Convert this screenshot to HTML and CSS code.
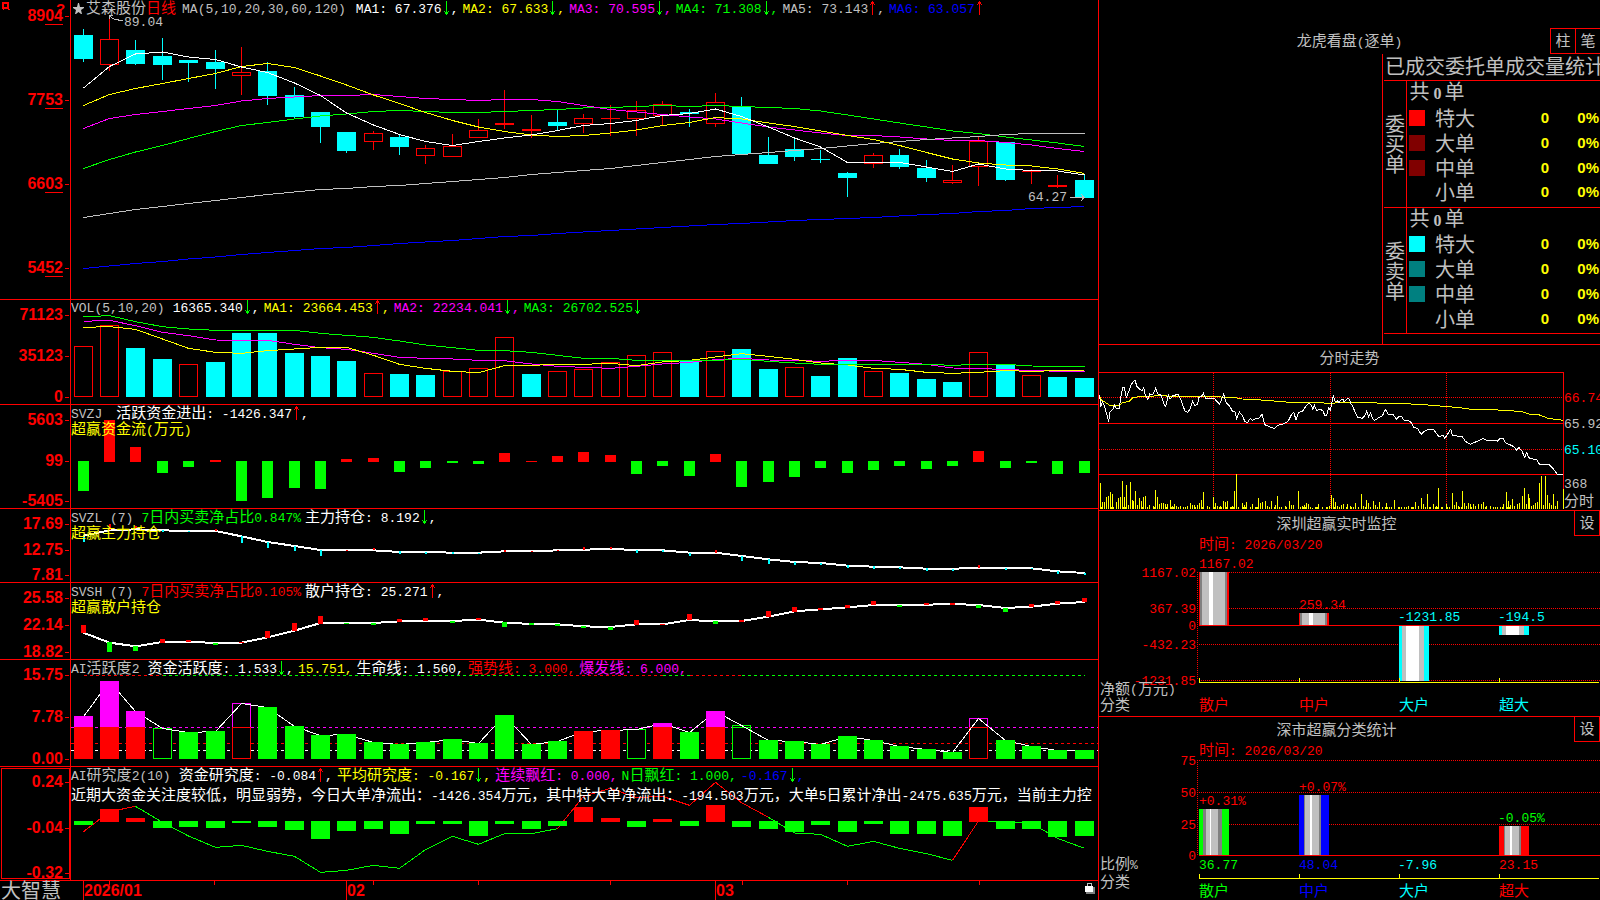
FILE: index.html
```html
<!DOCTYPE html>
<html lang="zh-CN">
<head>
<meta charset="utf-8">
<title>艾森股份 日线</title>
<link rel="stylesheet" href="styles.css">
</head>
<body>
<svg class="defs" aria-hidden="true">
  <symbol id="down" viewBox="0 0 5 14"><path d="M2 0h1v14h-1zM0 10h1v1h3v-1h1v1h-1v2h-3v-2h-1z"/></symbol>
  <symbol id="up" viewBox="0 0 5 14"><path d="M2 0h1v14h-1zM1 1h3v2h1v1h-1v-1h-3v1h-1v-1h1z"/></symbol>
</svg>
<main class="screen">
  <section class="charts">
    <article class="panel">
      <div class="axis axis-price"><span>89<u>04</u></span><span>77<u>53</u></span><span>66<u>03</u></span><span>54<u>52</u></span></div>
      <svg class="plot" id="price" viewBox="71 0 1027 299" preserveAspectRatio="none"></svg>
      <div class="legend">
        <p class="row gray"><svg class="star" viewBox="0 0 11 11"><path d="M5 0h1l1 4h4v1l-3 2 1 4h-1l-2.500-2-2.500 2h-1l1-4-3-2v-1h4z"/></svg><b class="stock">艾森股份<i class="red">日线</i></b><b class="m formula">MA(5,10,20,30,60,120)</b>
          <b class="m white">MA1: 67.376<svg class="arr green"><use href="#down"/></svg>,</b>
          <b class="m yellow">MA2: 67.633<svg class="arr green"><use href="#down"/></svg>,</b>
          <b class="m magenta">MA3: 70.595<svg class="arr green"><use href="#down"/></svg>,</b>
          <b class="m green">MA4: 71.308<svg class="arr green"><use href="#down"/></svg>,</b>
          <b class="m gray">MA5: 73.143<svg class="arr red"><use href="#up"/></svg>,</b>
          <b class="m blue">MA6: 63.057<svg class="arr red"><use href="#up"/></svg></b></p>
      </div>
      <span class="callout high m">89.04</span>
      <span class="callout low m">64.27</span>
    </article>
    <article class="panel">
      <div class="axis"><span>71123</span><span>35123</span><span>0</span></div>
      <svg class="plot" id="volume" viewBox="71 300 1027 104" preserveAspectRatio="none"></svg>
      <div class="legend"><p class="row gray"><b class="m">VOL(5,10,20)</b>
        <b class="m white after-title">16365.340<svg class="arr green"><use href="#down"/></svg>,</b>
        <b class="m yellow">MA1: 23664.453<svg class="arr red"><use href="#up"/></svg>,</b>
        <b class="m magenta">MA2: 22234.041<svg class="arr green"><use href="#down"/></svg>,</b>
        <b class="m green">MA3: 26702.525<svg class="arr green"><use href="#down"/></svg></b></p></div>
    </article>
    <article class="panel">
      <div class="axis"><span>5603</span><span>99</span><span>-5405</span></div>
      <svg class="plot" id="flow" viewBox="71 405 1027 103" preserveAspectRatio="none"></svg>
      <div class="legend"><p class="row gray"><b class="m">SVZJ</b>
        <b class="white wide-gap">活跃资金进出<i class="m">: -1426.347</i><svg class="arr red"><use href="#up"/></svg><i class="m">,</i></b></p>
        <p class="row yellow"><b>超赢资金流<i class="m">(</i>万元<i class="m">)</i></b></p></div>
    </article>
    <article class="panel">
      <div class="axis"><span>17.69</span><span>12.75</span><span>7.81</span></div>
      <svg class="plot" id="mainforce" viewBox="71 509 1027 73" preserveAspectRatio="none"></svg>
      <div class="legend"><p class="row gray"><b class="m">SVZL (7)</b>
        <b class="green after-title"><i class="m">7</i>日内买卖净占比<i class="m">0.847%</i></b>
        <b class="white">主力持仓<i class="m">: 8.192</i><svg class="arr green"><use href="#down"/></svg><i class="m">,</i></b></p>
        <p class="row yellow"><b>超赢主力持仓</b></p></div>
    </article>
    <article class="panel">
      <div class="axis"><span>25.58</span><span>22.14</span><span>18.82</span></div>
      <svg class="plot" id="retail" viewBox="71 583 1027 76" preserveAspectRatio="none"></svg>
      <div class="legend"><p class="row gray"><b class="m">SVSH (7)</b>
        <b class="red after-title"><i class="m">7</i>日内买卖净占比<i class="m">0.105%</i></b>
        <b class="white">散户持仓<i class="m">: 25.271</i><svg class="arr red"><use href="#up"/></svg><i class="m">,</i></b></p>
        <p class="row yellow"><b>超赢散户持仓</b></p></div>
    </article>
    <article class="panel">
      <div class="axis"><span>15.75</span><span>7.78</span><span>0.00</span></div>
      <svg class="plot" id="active" viewBox="71 660 1027 106" preserveAspectRatio="none"></svg>
      <div class="legend"><p class="row gray"><b><i class="m">AI</i>活跃度<i class="m">2</i></b>
        <b class="white after-title">资金活跃度<i class="m">: 1.533</i><svg class="arr green"><use href="#down"/></svg><i class="m">,</i></b>
        <b class="m yellow">15.751,</b>
        <b class="white">生命线<i class="m">: 1.560,</i></b>
        <b class="red">强势线<i class="m">: 3.000,</i></b>
        <b class="magenta">爆发线<i class="m">: 6.000,</i></b></p></div>
    </article>
    <article class="panel">
      <div class="axis selected"><span>0.24</span><span>-0.04</span><span>-0.32</span></div>
      <svg class="plot" id="research" viewBox="71 767 1027 113" preserveAspectRatio="none"></svg>
      <div class="legend spaced"><p class="row gray"><b><i class="m">AI</i>研究度<i class="m">2(10)</i></b>
        <b class="white after-title">资金研究度<i class="m">: -0.084</i><svg class="arr red"><use href="#up"/></svg><i class="m">,</i></b>
        <b class="yellow">平均研究度<i class="m">: -0.167</i><svg class="arr green"><use href="#down"/></svg><i class="m">,</i></b>
        <b class="magenta">连续飘红<i class="m">: 0.000,</i></b>
        <b class="green"><i class="m">N</i>日飘红<i class="m">: 1.000,</i></b>
        <b class="m blue">-0.167<svg class="arr green"><use href="#down"/></svg>,</b></p>
        <p class="row white"><b>近期大资金关注度较低，明显弱势，今日大单净流出：<i class="m">-1426.354</i>万元，其中特大单净流出：<i class="m">-194.503</i>万元，大单<i class="m">5</i>日累计净出<i class="m">-2475.635</i>万元，当前主力控</b></p></div>
    </article>
    <footer class="timeline">
      <span class="brand">大智慧</span>
      <div class="months"><svg class="ticks" id="ticks" viewBox="71 880 1027 20" preserveAspectRatio="none"></svg>
        <span>2026/01</span><span>02</span><span>03</span></div>
      <svg class="lock" viewBox="0 0 10 12"><path fill="#c0c0c0" d="M2 1h5v3h-1v-2h-3v2h-1z"/><path fill="#808080" d="M1 5h9v7h-9z"/><path fill="#fff" d="M0 4h8v6h-8z"/></svg>
    </footer>
    <svg class="corner" viewBox="0 0 70 20"><path d="M2 2h7v7h-7zM4 4v3h3v-3zM3 9h1v1h-1zM8 9h2v1h-2z" fill-rule="evenodd"/></svg>
    <span class="help">?</span>
  </section>

  <aside class="side">
    <section class="box orders">
      <header class="bar"><h2>龙虎看盘<i class="m">(</i>逐单<i class="m">)</i></h2><div class="tools"><button type="button">柱</button><button type="button">笔</button></div></header>
      <div class="stats">
        <table>
          <caption><span>已成交委托单成交量统计</span></caption>
          <tbody>
            <tr><th class="group" rowspan="5" scope="rowgroup">委<br>买<br>单</th><th class="total" colspan="4">共<em>0</em>单</th></tr>
            <tr><td class="sw"><span class="s1"></span></td><th>特大</th><td>0</td><td>0%</td></tr>
            <tr><td class="sw"><span class="s2"></span></td><th>大单</th><td>0</td><td>0%</td></tr>
            <tr><td class="sw"><span class="s2"></span></td><th>中单</th><td>0</td><td>0%</td></tr>
            <tr><td class="sw"></td><th>小单</th><td>0</td><td>0%</td></tr>
          </tbody>
          <tbody>
            <tr><th class="group" rowspan="5" scope="rowgroup">委<br>卖<br>单</th><th class="total" colspan="4">共<em>0</em>单</th></tr>
            <tr><td class="sw"><span class="s3"></span></td><th>特大</th><td>0</td><td>0%</td></tr>
            <tr><td class="sw"><span class="s4"></span></td><th>大单</th><td>0</td><td>0%</td></tr>
            <tr><td class="sw"><span class="s4"></span></td><th>中单</th><td>0</td><td>0%</td></tr>
            <tr><td class="sw"></td><th>小单</th><td>0</td><td>0%</td></tr>
          </tbody>
        </table>
      </div>
    </section>
    <section class="box"><header class="bar plain"><h2>分时走势</h2></header><svg class="view" id="intraday" viewBox="1099 372 501 137" preserveAspectRatio="xMinYMin meet"></svg></section>
    <section class="box"><header class="bar one"><h2>深圳超赢实时监控</h2><button type="button">设</button></header><svg class="view" id="monitor" viewBox="1099 536 501 180" preserveAspectRatio="xMinYMin meet"></svg></section>
    <section class="box"><header class="bar one"><h2>深市超赢分类统计</h2><button type="button">设</button></header><svg class="view" id="classes" viewBox="1099 742 501 158" preserveAspectRatio="xMinYMin meet"></svg></section>
  </aside>
</main>
<script src="charts.js"></script>
</body>
</html>
```
FILE: styles.css
```css
* { box-sizing: border-box; }
html, body { margin: 0; height: 100%; }
body {
  background: #000;
  color: #c0c0c0;
  font: 15px/16px "Noto Sans CJK SC", sans-serif;
  overflow: hidden;
}
p, h2 { margin: 0; font: inherit; }
b, i, em, th { font-style: normal; font-weight: inherit; }
.defs { position: absolute; width: 0; height: 0; }
.m { font-family: "Liberation Mono", "Noto Sans CJK SC", monospace; font-size: 13px; }
.red { color: #f00; } .green { color: #0f0; } .yellow { color: #ff0; }
.magenta { color: #f0f; } .blue { color: #00f; } .white { color: #fff; } .gray { color: #c0c0c0; }

.screen { display: grid; grid-template-columns: minmax(0, 1098fr) minmax(0, 502fr); grid-template-rows: minmax(0, 1fr); height: 100vh; }
.charts {
  position: relative; display: grid; min-width: 0;
  grid-template-rows: minmax(0, 299fr) minmax(0, 105fr) minmax(0, 104fr) minmax(0, 74fr) minmax(0, 77fr) minmax(0, 107fr) minmax(0, 114fr) minmax(0, 20fr);
}
.panel { position: relative; display: grid; grid-template: minmax(0, 1fr) / 71px minmax(0, 1fr); min-height: 0; border-top: 1px solid #f00; }
.panel:first-child { border-top: 0; }
.axis {
  display: flex; flex-direction: column; justify-content: space-between; align-items: flex-end;
  padding: 8px 7px 0 0; border-right: 1px solid #f00;
  color: #f00; font: bold 16px/14px "Liberation Sans", sans-serif;
}
.axis span { position: relative; }
.axis span::after { content: ""; position: absolute; right: -6px; top: 7px; width: 4px; height: 1px; background: #f00; }
.axis u { display: inline-block; text-decoration: none; padding-bottom: 1px; border-bottom: 1px solid #f00; margin-bottom: -2px; }
.axis-price { padding: 9px 7px 24px 0; }
.axis.selected { outline: 1px solid #f00; outline-offset: -2px; }
.plot { grid-area: 1 / 2; width: 100%; height: 100%; display: block; min-height: 0; }
svg { shape-rendering: crispEdges; }
.legend { grid-area: 1 / 2; position: relative; overflow: hidden; white-space: nowrap; }
.row { display: flex; gap: 4px; height: 16px; align-items: baseline; line-height: 13px; }
.legend.spaced .row { margin-bottom: 4px; }
.row b { flex: none; }
.after-title { margin-left: 4px; }
.wide-gap { margin-left: 10px; }
.arr { width: 5px; height: 14px; margin: 0 2px; vertical-align: -2px; fill: currentColor; }
.star { width: 11px; height: 11px; margin: 0 -2px 0 2px; align-self: center; flex: none; fill: #c0c0c0; shape-rendering: auto; }
.formula { margin: 0 6px 0 2px; }
.callout { position: absolute; line-height: 14px; }
.callout.high { left: 124px; top: 16px; }
.callout.low { right: 31px; bottom: 94px; }
.timeline { display: grid; grid-template: minmax(0, 1fr) / 71px minmax(0, 1fr); position: relative; line-height: 20px; border-top: 1px solid #f00; }
.brand { font-size: 20px; padding-left: 1px; line-height: 18px; }
.months { position: relative; display: grid; grid-template-columns: 263fr 369fr 382fr; padding-left: 13px; color: #f00; font: bold 16px/20px "Liberation Sans", sans-serif; }
.ticks { position: absolute; left: 0; top: -1px; width: 100%; height: 20px; }
.lock { position: absolute; right: 3px; top: 1px; width: 10px; height: 12px; }
.corner { position: absolute; left: 0; top: 0; width: 70px; height: 20px; fill: #f00; }
.help { position: absolute; left: 56px; top: 0; color: #f00; font: bold 15px/18px "Liberation Sans", sans-serif; }

.side {
  display: grid; min-width: 0; border-left: 1px solid #f00;
  grid-template-rows: minmax(0, 344fr) minmax(0, 166fr) minmax(0, 206fr) minmax(0, 184fr);
}
.box { display: flex; flex-direction: column; min-height: 0; min-width: 0; border-top: 1px solid #f00; overflow: hidden; }
.box:first-child { border-top: 0; }
.bar { display: grid; grid-template-columns: 1fr auto 1fr; flex: none; height: 26px; }
.bar h2 { line-height: 24px; text-align: center; }
.bar.plain { height: 27px; }
.bar.plain h2, .orders h2 { grid-column: 2; }
.bar.one { grid-template-columns: 1fr 26px; height: 25px; }
.bar.one button { margin-top: -1px; }
button { background: #000; border: 1px solid #f00; color: inherit; font: inherit; width: 26px; height: 26px; padding: 0 0 2px; }
.orders .bar { padding-top: 28px; height: 54px; }
.tools { display: flex; justify-content: flex-end; }
.tools button { width: 25px; border-right: 0; }
.view { flex: 1; width: 100%; min-height: 0; display: block; }
.view text { font-family: "Liberation Mono", "Noto Sans CJK SC", monospace; font-size: 13px; }
.view .cjk { font-family: "Noto Sans CJK SC", sans-serif; font-size: 15px; }

.stats { flex: 1; margin-left: 283px; border-left: 1px solid #f00; padding-left: 1px; overflow: hidden; }
table { width: 100%; border-collapse: collapse; font-size: 20px; line-height: 20px; }
caption { text-align: left; white-space: nowrap; height: 27px; padding-left: 1px; line-height: 24px; border-bottom: 1px solid #f00; }
caption span { display: block; width: 0; }
tbody { border-bottom: 1px solid #f00; }
tr { height: 25px; }
tr:first-child { height: 24px; }
th, td { padding: 0 0 4px; text-align: left; white-space: nowrap; }
td { color: #ff0; text-align: right; font: bold 15px/20px "Liberation Sans", sans-serif; }
th.group { width: 22px; border-right: 1px solid #f00; padding: 1px 0 0 1px; }
th.total { padding-left: 3px; }
em { display: inline-block; width: 12px; text-align: right; margin-right: 3px; font: bold 16px/18px "Liberation Serif", serif; }
td.sw { width: 29px; padding-left: 2px; text-align: left; }
td.sw span { display: block; width: 16px; height: 16px; }
.s1 { background: #f00; } .s2 { background: #800000; } .s3 { background: #0ff; } .s4 { background: #008080; }
td:last-child { width: 51px; padding-right: 1px; }
```
FILE: charts.js
```js
const RED = '#f00', GREEN = '#0f0', CYAN = '#0ff', WHITE = '#fff', YELLOW = '#ff0', MAGENTA = '#f0f', BLUE = '#00f', GRAY = '#c0c0c0', DARK = '#808080';

const left = i => Math.floor(74.3 + 26.34 * i);
const mid = i => left(i) + 9.5;
const rect = (x, y, w, h, fill) => `<rect x="${x}" y="${y}" width="${w}" height="${h}" fill="${fill}"/>`;
const hollow = (x, y, w, h, stroke, fill = 'none') => `<rect x="${x + .5}" y="${y + .5}" width="${w - 1}" height="${Math.max(h - 1, 0)}" fill="${fill}" stroke="${stroke}"/>`;
const poly = (pts, stroke, w = 1) => `<polyline points="${pts.map(p => p.join()).join(' ')}" fill="none" stroke="${stroke}" stroke-width="${w}"/>`;
const curve = (ys, stroke, w) => poly(ys.map((y, i) => [mid(i), y]), stroke, w);
const line = (x1, y1, x2, y2, stroke, dash) => `<line x1="${x1}" y1="${y1}" x2="${x2}" y2="${y2}" stroke="${stroke}"${dash ? ` stroke-dasharray="${dash}"` : ''}/>`;
const label = (x, y, text, fill, cls = '', anchor = 'start') => `<text x="${x}" y="${y}" fill="${fill}" class="${cls}" text-anchor="${anchor}">${text}</text>`;
const draw = (id, parts) => { document.getElementById(id).innerHTML = parts.flat().join(''); };
const thirds = (list, base) => list.map(v => v / 3 + base);

/* kind, wick top, wick bottom, body top, body bottom */
const candles = [
  ['c',29,62,35,59],['r',17,71,39,65],['c',40,65,50,64],['c',38,80,56,65],['c',60,82,60,63],['c',50,89,62,69],['r',47,95,72,76],['c',62,105,71,96],
  ['c',87,118,95,117],['c',112,143,112,127],['c',132,153,132,151],['r',131,150,133,142],['c',135,155,137,147],['r',145,164,148,156],['r',134,157,146,157],['r',119,138,130,138],
  ['r',90,129,123,125],['r',115,138,129,131],['c',110,130,122,126],['r',114,133,118,124],['r',105,136,118,119],['r',101,136,110,119],['r',101,125,104,116],['c',109,127,112,114],
  ['r',93,127,102,124],['c',97,154,106,154],['c',137,164,155,164],['c',138,161,149,157],['c',150,163,159,160],['c',172,197,173,178],['r',153,168,155,164],['c',149,169,155,167],
  ['c',160,182,168,178],['r',165,184,180,183],['r',137,186,141,167],['c',142,181,142,180],['r',169,184,171,172],['r',175,188,185,187],['c',175,198,180,198]];
draw('price', [
  candles.map(([k, h, l, t, b], i) => {
    const x = left(i), c = k === 'c' ? CYAN : RED;
    if (k === 'c' || b - t < 3) return rect(x + 9, h, 1, l - h, c) + rect(x, t, 19, b - t, c);
    return rect(x + 9, h, 1, t - h, c) + rect(x + 9, b, 1, l - b, c) + hollow(x, t, 19, b - t, c);
  }),
  curve([268.5,266,263.5,261.5,259,257,254.5,252.5,250.5,248.5,247.5,245.5,243.5,242,240.5,238.5,236.5,235.5,233.5,232,230.5,229,227.5,226,224.5,223.5,222,220.5,219.5,218.5,217.5,216,214.5,213.5,211.5,210.5,208.5,207.5,206.5], BLUE),
  curve([168.5,159.5,152,145.5,138.5,131.5,125.5,122.5,119,116,114,111.5,110.5,111.5,112.5,112.5,111.5,110.5,109.5,108,107.5,106.5,105.5,106.5,105.5,106.5,107.5,108.5,111,115,119,123,127,131,133.5,137,140,143,146.5], GREEN),
  curve([128.5,118.5,114.5,111.5,108.5,105.5,101,98.5,97,95.5,95.5,94.5,96.5,98.5,99.5,100.5,99.5,99.5,101.5,105.5,109.5,112,114.5,117,119,123,127,130,133,135.5,135.5,137,139,140.5,140.5,142.5,145,148.5,151.5], MAGENTA),
  curve([217.5,213.5,209.5,206.5,203.5,200.5,197.5,194.5,192,189.5,188.5,186.5,185.5,183.5,181.5,179.5,177.5,174.5,172.5,170.5,168.5,165.5,162.5,159.5,156.5,154.5,152.5,150.5,148.5,146,143.5,141.5,139.5,138,136.5,134.5,133.5,133.5,133.5], GRAY),
  curve([105.5,94.5,88.5,83.5,78.5,73.5,66.5,63.5,67.5,76,85,95,103.5,112.5,120.5,127,131.5,135,136.5,135.5,133,130,125.5,122.5,117.5,119,123,126.5,131,135.5,139.5,145.5,152.5,159,163,165,166,169,173.5], YELLOW),
  curve([88,66.5,54,52,57,59.5,67,72.5,83,95.5,113,125,134.5,141.5,145.5,141.5,138,135,130.5,125.5,123.5,120.5,115.5,113.5,109,116.5,127,138,147,162.5,162.5,162.5,167,171.5,164,169,170.5,171,175], WHITE),
  poly([[109, 16], [114, 19], [123, 21]], GRAY), poly([[109, 19], [109, 16], [113, 15]], GRAY),
  poly([[1070, 197.5], [1084, 197.5]], GRAY), poly([[1081, 194], [1084, 197.5], [1081, 201]], GRAY)
]);

const vols = 'r346 r325 c348 c359 r364 c362 c333 c333 c353 c356 c361 r373 c374 c375 r371 r368 r337 c374 r371 r369 r362 r355 r352 c361 r351 c349 c369 r367 c376 c358 r371 c373 c379 c382 r352 c364 r375 c377 c378'.split(' ');
draw('volume', [
  vols.map((v, i) => { const y = +v.slice(1); return v[0] === 'c' ? rect(left(i), y, 19, 397 - y, CYAN) : hollow(left(i), y, 19, 397 - y, RED); }),
  curve(thirds([79,76,92,112,122,135,136,136,148,158,163,175,187,190,192,196,197,207,214,217,220,214,207,202,194,190,195,196,199,196,196,202,208,219,220,224,226,229,229], 295), MAGENTA),
  curve(thirds([97,95,103,132,160,172,175,167,162,157,157,181,208,220,229,233,212,211,208,208,205,212,201,196,186,176,184,193,204,210,220,223,232,235,232,227,229,227,226], 295), YELLOW),
  curve(thirds([65,62,80,95,102,106,106,106,106,115,121,127,138,150,158,166,167,172,181,190,190,196,196,196,196,193,199,204,208,208,208,208,208,211,208,208,213,214,214], 295), GREEN)
]);

const flows = 'g491 r420 r447 g473 g467 r460 g501 g498 g488 g489 r459 r458 g472 g468 g463 g464 r453 r461 r456 r452 r455 g474 g466 g476 r454 g487 g482 g477 g468 g473 g470 g466 g469 g466 r451 g468 g463 g474 g473'.split(' ');
draw('flow', flows.map((v, i) => { const y = +v.slice(1); return v[0] === 'g' ? rect(left(i) + 4, 461, 11, y - 461, GREEN) : rect(left(i) + 4, y, 11, Math.max(462 - y, 1), RED); }));

const marks = (text, base, w, down) => text.split(' ').map((s, i) => {
  const [a, b] = s.slice(1).split('-').map(v => Math.round(v / 3 + base));
  return rect(left(i) + 10 - Math.ceil(w / 2), a, w, Math.max(b - a, 1), s[0] === 'r' ? RED : down);
});
draw('mainforce', [
  curve(thirds([722,706,703,706,708,708,724,741,753,765,766,766,771,771,773,773,769,769,766,764,762,765,766,773,773,783,793,801,804,812,815,817,821,821,819,819,820,829,834], 295), WHITE, 2),
  marks('c722-741 r688-706 r694-700 c705-711 c708-711 r703-708 c724-744 c742-759 c753-768 c766-783 r765-768 r760-765 c768-777 c771-777 c771-777 c773-776 r765-771 r767-771 r766-768 r756-765 r756-762 c765-774 c765-771 c774-783 r765-774 c783-798 c792-807 c801-810 c804-810 c810-819 c813-822 c816-822 c819-828 c822-828 r810-819 c819-825 c819-822 c828-837 c834-840', 295, 2, CYAN)
]);
draw('retail', [
  curve(thirds([128,158,169,156,155,159,158,142,122,99,99,99,94,93,93,89,98,102,103,109,111,103,103,90,94,93,80,64,58,52,45,45,44,42,45,54,50,41,36], 590), WHITE, 2),
  marks('r105-129 g155-186 g168-183 r147-159 r150-156 g159-165 r155-159 r123-144 r99-123 r78-102 g99-102 g99-105 r87-96 r84-93 g93-99 r84-90 g96-111 g99-105 g102-108 g108-114 g111-120 r90-105 r102-105 r72-90 g93-102 r90-96 r63-81 r51-66 r54-60 r45-54 r33-45 g45-51 r39-45 r39-45 g45-54 g54-66 r42-51 r33-42 r24-36', 590, 5, GREEN)
]);

/* M: magenta over red, H: same but hollow, G/R: filled, g: hollow green */
const acts = 'M716 M681 M711 g728 G732 G731 H703 G707 G726 G735 G734 G742 G744 G742 G739 G743 G715 G744 G741 R731 R730 g729 M723 G732 M711 g725 G740 G741 G744 G736 G740 G746 G749 G752 H718 G740 G746 G750 G750'.split(' ');
const actBar = (v, i) => {
  const k = v[0], y = +v.slice(1), x = left(i);
  if (k === 'M') return rect(x, y, 19, 727 - y, MAGENTA) + rect(x, 727, 19, 32, RED);
  if (k === 'H') return hollow(x, y, 19, 728 - y, MAGENTA, '#000') + hollow(x, 727, 19, 32, RED, '#000');
  if (k === 'g') return hollow(x, y, 19, 759 - y, GREEN, '#000') + (y < 727 ? rect(x, 727, 19, 1, GREEN) : '');
  return rect(x, y, 19, 759 - y, k === 'G' ? GREEN : RED);
};
const isHollow = v => v[0] === 'H' || v[0] === 'g';
draw('active', [
  [[0,3,RED],[3,18,GREEN],[18,22,RED],[22,23,GREEN],[23,25,RED],[25,38,GREEN]].map(([a, b, c]) => line(mid(a), 675.5, mid(b), 675.5, c, '3 3')),
  line(71, 727.5, 1098, 727.5, MAGENTA, '3 3'), line(71, 743.5, 1098, 743.5, RED, '3 3'), line(71, 750.5, 1098, 750.5, WHITE, '3 3'),
  acts.map((v, i) => isHollow(v) ? actBar(v, i) : ''),
  curve(acts.map(v => +v.slice(1) + .5), WHITE),
  acts.map((v, i) => isHollow(v) ? '' : actBar(v, i))
]);

const studies = 'g825 r809 r818 g828 g827 g828 g823 g827 g830 g839 g831 g829 g834 g824 g824 g836 g824 g829 g826 r807 r818 g827 r819 g826 r805 g827 g829 g832 g825 g832 g824 g834 g834 g836 r807 g829 g829 g837 g836'.split(' ');
const avg = thirds([725,665,649,697,738,772,766,784,799,847,841,826,835,779,739,763,731,731,716,619,595,623,619,646,577,638,682,729,733,769,754,775,791,811,693,695,700,745,775], 590);
draw('research', [
  [[0,2,RED],[2,18,GREEN],[18,26,RED],[26,33,GREEN],[33,34,RED],[34,38,GREEN]].map(([a, b, c]) => poly(avg.slice(a, b + 1).map((y, j) => [mid(a + j), y]), c)),
  studies.map((v, i) => { const y = +v.slice(1); return v[0] === 'g' ? rect(left(i), 821, 19, y - 821, GREEN) : rect(left(i), y, 19, 822 - y, RED); })
]);
draw('ticks', [[83, 346, 715].map(x => rect(x, 880, 1, 20, RED)), [109, 214, 373, 478, 610, 742, 847, 979].map(x => rect(x, 880, 1, 5, RED))]);

/* intraday: samples at three per pixel */
const pairs = s => s.trim().split(/\s+/).map(p => p.split(',').map(Number));
const scale = ps => ps.map(([x, y]) => [+(1098 + x / 3).toFixed(2), +(340 + y / 3).toFixed(2)]);
const price = pairs(`5,165 8,200 13,185 20,200 26,222 32,245 36,215 45,207 50,195 55,205 64,205 70,160 75,142 79,142 85,172 92,155 98,137 105,126 111,121 117,140 125,148 132,152 137,143 142,165 149,178 155,162 165,163 173,145 180,162 190,166 197,190 203,200 211,165 216,178 225,167 240,163 248,178 255,198 262,215 270,217 277,205 284,184 290,196 298,194 303,172 310,170 316,160 322,174 335,176 350,176 358,186 365,192 372,175 377,163 384,187 395,198 403,213 410,213 416,236 424,216 434,228 440,244 448,248 457,235 463,241 475,235 484,234 492,222 500,254 510,258 520,263 530,265 540,256 555,252 570,244 580,225 587,217 594,239 602,218 614,213 624,198 633,190 640,195 644,208 649,196 656,212 664,207 675,212 680,226 686,226 692,203 697,210 706,168 712,186 718,182 724,188 728,180 735,178 738,187 748,175 754,178 758,190 765,200 772,220 780,232 792,235 800,228 806,214 812,230 818,218 824,237 830,241 842,233 853,228 862,208 870,222 885,223 895,238 903,229 912,231 918,241 932,242 940,248 948,263 958,265 970,283 978,275 988,269 1008,270 1015,280 1022,289 1035,287 1041,295 1047,285 1058,268 1064,287 1092,289 1102,304 1117,313 1125,309 1140,303 1155,296 1165,301 1185,302 1192,300 1198,304 1205,296 1216,296 1222,308 1235,314 1248,320 1255,331 1263,322 1272,334 1280,352 1286,338 1292,353 1300,356 1317,360 1325,374 1355,375 1365,385 1378,403 1395,404`);
const mean = pairs(`5,170 10,180 20,186 35,196 65,196 75,187 92,185 105,173 122,170 165,170 170,166 203,166 207,169 367,170 372,172 412,173 432,177 485,178 490,181 545,184 575,187 675,187 680,190 700,190 735,187 887,190 965,193 1015,197 1085,203 1120,208 1185,209 1225,212 1270,214 1293,222 1322,224 1350,235 1395,241`);
const ticks = pairs(`7,430 13,487 19,487 25,471 31,468 37,456 43,462 55,487 61,474 67,471 73,423 79,471 85,435 91,495 97,426 103,480 106,482 112,453 118,495 125,474 131,483 137,471 142,468 148,500 155,495 166,498 172,450 178,471 184,493 190,490 196,489 202,492 208,492 217,480 223,498 229,492 236,498 246,498 256,500 268,498 277,489 283,494 290,495 298,495 304,489 310,480 316,456 328,497 346,471 352,489 358,498 366,497 376,483 382,486 388,483 396,500 403,497 409,453 415,402 421,500 433,489 439,496 445,486 463,492 475,500 481,474 487,489 493,486 502,483 509,498 520,483 532,496 538,468 550,500 562,498 574,483 580,494 586,495 601,453 607,500 613,498 619,496 625,489 631,492 644,503 655,500 660,492 672,500 684,500 694,498 700,465 706,474 712,486 718,498 730,496 736,493 748,492 757,498 772,489 790,462 796,498 805,480 811,489 826,483 832,496 838,500 845,485 862,500 866,489 880,500 889,480 900,500 918,500 930,497 943,500 952,486 960,498 970,474 976,493 988,462 994,500 1005,492 1014,498 1020,444 1030,500 1045,492 1055,500 1062,459 1068,496 1074,486 1080,498 1093,453 1099,490 1105,498 1112,489 1118,492 1125,492 1132,498 1142,492 1150,492 1157,486 1165,497 1178,498 1185,500 1197,503 1208,500 1215,492 1225,456 1231,483 1237,496 1243,477 1250,498 1257,492 1263,490 1272,468 1279,444 1285,492 1291,462 1294,475 1300,498 1306,495 1312,489 1318,486 1324,430 1330,408 1336,495 1342,408 1348,465 1354,489 1360,495 1366,462 1372,498 1378,483 1395,448`);
draw('intraday', [
  [397.5, 449.5].map(y => line(1099, y, 1563, y, RED, '1 1')),
  [1213.5, 1330.5, 1446.5].map(x => line(x, 373, x, 509, RED, '1 1')),
  [372, 423, 474].map(y => rect(1099, y, 465, 1, RED)), rect(1563, 372, 1, 137, RED),
  Array.from({ length: 105 }, (_, i) => rect(1101 + i * 4 + i % 3, 507, 1, 2, YELLOW)),
  ticks.map(([x, y]) => rect(Math.floor(1098 + x / 3), Math.round(340 + y / 3), 1, 509 - Math.round(340 + y / 3), YELLOW)),
  poly(scale(mean), YELLOW), poly(scale(price), WHITE),
  label(1564, 402, '66.74', RED), label(1564, 428, '65.92', GRAY), label(1564, 454, '65.10', CYAN),
  label(1564, 488, '368', GRAY), label(1564, 506, '分时', GRAY, 'cjk')
]);

const strips = (x, y, bottom, spec) => spec.map(([a, b, c]) => rect(x + a / 3, y, (b - a) / 3, bottom - y, c));
const axisLine = y => [rect(1199, y, 400, 1, YELLOW), [1199, 1299, 1399, 1499].map(x => rect(x, y - 4, 1, 4, YELLOW))].flat();
const date = y => [label(1199, y, '时间', RED, 'cjk'), label(1229, y, ': 2026/03/20', RED)];
const names = (y, colors) => ['散户', '中户', '大户', '超大'].map((n, i) => label(1199 + 100 * i, y, n, colors[i], 'cjk'));
const redBar = [[0,3,RED],[3,9,DARK],[9,30,GRAY],[30,42,WHITE],[42,78,GRAY],[78,84,DARK],[84,90,RED]];
const cyanBar = [[0,9,CYAN],[9,21,GRAY],[21,60,WHITE],[60,75,GRAY],[75,90,CYAN]];
draw('monitor', [
  date(549),
  [572.5, 608.5, 644.5, 680.5].map(y => line(1199, y, 1600, y, RED, '1 1')), line(1197.5, 572, 1197.5, 680, RED, '1 1'),
  strips(1199, 572, 625, redBar), strips(1299, 613, 625, redBar), strips(1399, 626, 681, cyanBar), strips(1499, 626, 635, cyanBar),
  rect(1199, 625, 401, 1, RED), axisLine(682),
  [['1167.02', 577], ['367.39', 613], ['0', 630], ['-432.23', 649], ['-1231.85', 685]].map(([t, y]) => label(1196, y, t, RED, '', 'end')),
  label(1199, 568, '1167.02', RED), label(1299, 609, '259.34', RED), label(1398, 621, '-1231.85', CYAN), label(1498, 621, '-194.5', CYAN),
  label(1100, 694, '净额', GRAY, 'cjk'), label(1130, 693, '(', GRAY), label(1138, 694, '万元', GRAY, 'cjk'), label(1168, 693, ')', GRAY), label(1100, 710, '分类', GRAY, 'cjk'),
  names(710, [RED, RED, CYAN, CYAN])
]);
draw('classes', [
  date(755),
  [760.5, 792.5, 824.5].map(y => line(1199, y, 1600, y, RED, '1 1')), line(1197.5, 760, 1197.5, 855, RED, '1 1'),
  strips(1199, 809, 855, [[0,12,GREEN],[12,21,DARK],[21,33,GRAY],[33,36,WHITE],[36,57,GRAY],[57,69,DARK],[69,90,GREEN]]),
  strips(1299, 795, 855, [[0,15,BLUE],[15,18,DARK],[18,33,GRAY],[33,39,WHITE],[39,60,GRAY],[60,66,DARK],[66,90,BLUE]]),
  strips(1499, 826, 855, [[0,15,RED],[15,18,DARK],[18,33,GRAY],[33,39,WHITE],[39,60,GRAY],[60,66,DARK],[66,90,RED]]),
  rect(1199, 855, 401, 1, RED), axisLine(878),
  [['75', 765], ['50', 797], ['25', 829], ['0', 860]].map(([t, y]) => label(1196, y, t, RED, '', 'end')),
  label(1199, 805, '+0.31%', RED), label(1299, 791, '+0.07%', RED), label(1498, 822, '-0.05%', GREEN),
  label(1199, 869, '36.77', GREEN), label(1299, 869, '48.04', BLUE), label(1398, 869, '-7.96', CYAN), label(1499, 869, '23.15', RED),
  label(1100, 869, '比例', GRAY, 'cjk'), label(1130, 869, '%', GRAY), label(1100, 887, '分类', GRAY, 'cjk'),
  names(896, [GREEN, BLUE, CYAN, RED])
]);
```
